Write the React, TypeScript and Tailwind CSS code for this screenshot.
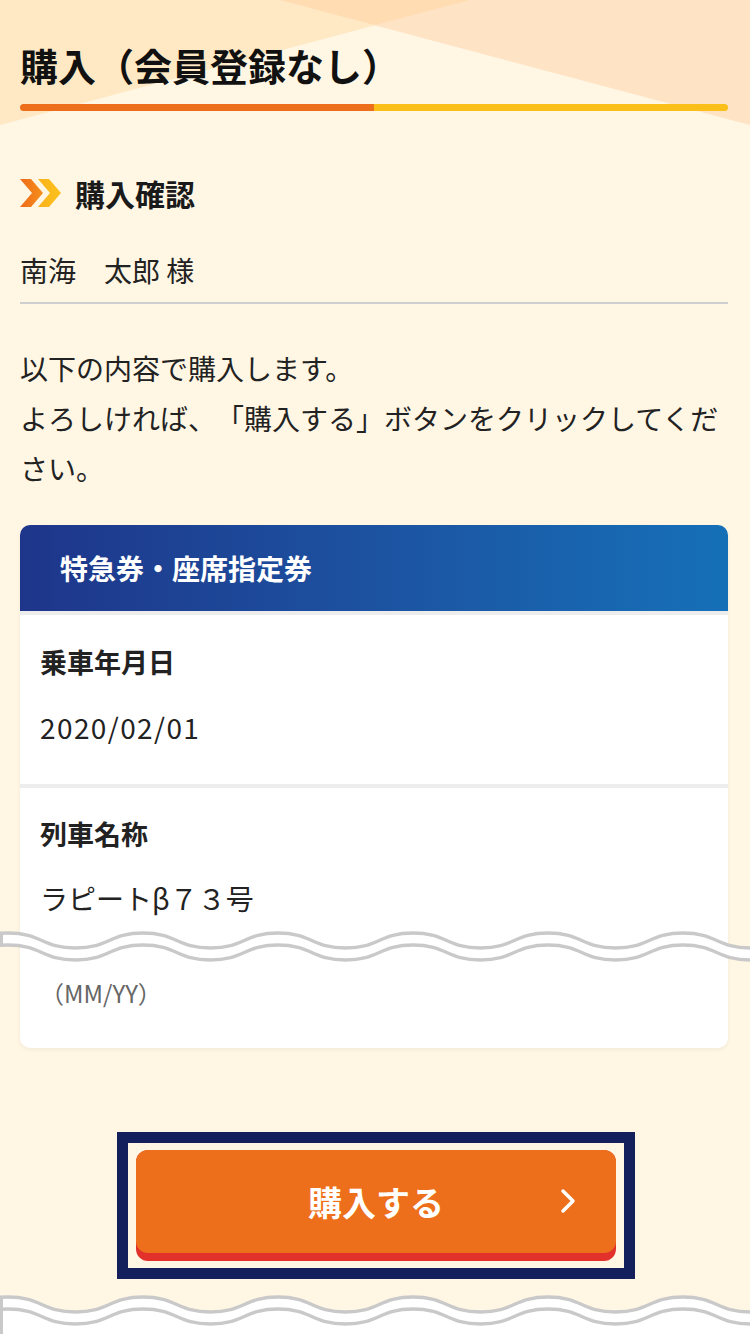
import React from "react";

const FONT = { fontFamily: '"Noto Sans CJK JP", "Noto Sans", sans-serif' };

// 波線（セクション省略の表示）
function wavePath(y0: number, amp: number, to: number) {
	const period = 135;
	const half = period / 2;
	let x = 8 - period; // 山の位置
	let d = `M ${x} ${y0}`;
	let up = true;
	while (x < to) {
		const y1 = up ? y0 + amp : y0;
		const yStart = up ? y0 : y0 + amp;
		d += ` C ${x + half / 2} ${yStart}, ${x + half / 2} ${y1}, ${x + half} ${y1}`;
		x += half;
		up = !up;
	}
	return d;
}

function Wave({ fillBelow }: { fillBelow?: boolean }) {
	const upper = wavePath(7, 15, 770);
	const lower = wavePath(19, 15, 770);
	const h = fillBelow ? 44 : 40;
	const clipId = fillBelow ? "band2" : "band1";
	return (
		<svg width="750" height={h} viewBox={`0 0 750 ${h}`} className="block">
			<defs>
				<clipPath id={clipId}>
					<path d={`${lower} L 800 -10 L -200 -10 Z`} />
				</clipPath>
			</defs>
			{fillBelow ? (
				<path d={`${upper} L 800 ${h} L -200 ${h} Z`} fill="#ffffff" />
			) : (
				<path
					d={`${upper} L 800 40 L -200 40 Z`}
					fill="#ffffff"
					clipPath={`url(#${clipId})`}
				/>
			)}
			<path d={upper} fill="none" stroke="#c9c9c9" strokeWidth="3.5" />
			<path d={lower} fill="none" stroke="#c9c9c9" strokeWidth="3.5" />
			<line
				x1="1.5"
				y1="7"
				x2="1.5"
				y2={fillBelow ? h : 19}
				stroke="#c9c9c9"
				strokeWidth="3"
			/>
		</svg>
	);
}

function Chevrons() {
	return (
		<svg width="42" height="28" viewBox="0 0 42 28">
			<defs>
				<linearGradient id="c1" x1="0" x2="1" y1="0" y2="0">
					<stop offset="0" stopColor="#ee6a1a" />
					<stop offset="1" stopColor="#f5901c" />
				</linearGradient>
				<linearGradient id="c2" x1="0" x2="1" y1="0" y2="0">
					<stop offset="0" stopColor="#f9b21b" />
					<stop offset="1" stopColor="#fcc21d" />
				</linearGradient>
			</defs>
			<polygon points="0,0 11,0 23,14 11,28 0,28 12,14" fill="url(#c1)" />
			<polygon points="18,0 29,0 41,14 29,28 18,28 30,14" fill="url(#c2)" />
		</svg>
	);
}

export default function App() {
	return (
		<div className="w-[750px] h-[1334px] overflow-hidden bg-[#fff6e4] text-[#222]" style={FONT}>
			{/* ヘッダー */}
			<div className="relative">
				<svg
					width="750"
					height="130"
					viewBox="0 0 750 130"
					className="absolute top-0 left-0"
				>
					<polygon points="0,0 470,0 0,125" fill="#ffe9c4" />
					<polygon points="280,0 750,0 750,125" fill="#ffe3c5" />
					<polygon points="280,0 470,0 375,25" fill="#ffdcb2" />
				</svg>
				<div className="relative pl-5 pr-[22px] pt-[40px]">
					<h1 className="text-[38px] leading-[50px] font-bold text-[#111]">
						購入（会員登録なし）
					</h1>
					<div className="mt-[14px] flex h-[7px] rounded-full overflow-hidden">
						<div className="w-1/2 bg-[#ee6f1b]" />
						<div className="w-1/2 bg-[#fbbf1a]" />
					</div>
				</div>
			</div>

			<div className="pl-5 pr-[22px]">
				{/* 購入確認 */}
				<div className="mt-[62px] flex items-center gap-[13px] h-[40px]">
					<Chevrons />
					<h2 className="text-[30px] leading-[40px] font-bold text-[#1a1a1a]">購入確認</h2>
				</div>
				<p className="mt-[37px] text-[28px] leading-[40px] pb-[12px] border-b-2 border-[#cfcfcf]">
					南海　太郎 様
				</p>
				<p className="mt-[39px] text-[28px] leading-[50px] [text-spacing-trim:space-all]">
					以下の内容で購入します。
					<br />
					よろしければ、「購入する」ボタンをクリックしてください。
				</p>

				{/* 購入内容カード */}
				<div className="mt-[32px] bg-white rounded-[10px] shadow-[0_2px_4px_rgba(0,0,0,0.05)]">
					<div className="h-[86px] rounded-t-[10px] bg-linear-to-r from-[#1e358a] to-[#1570b8] flex items-center pl-10">
						<span className="text-white font-bold text-[28px]">特急券・座席指定券</span>
					</div>
					<div className="border-t-4 border-[#ededed] px-5 pt-[29px] pb-[37px]">
						<div className="text-[27px] leading-[36px] font-bold">乗車年月日</div>
						<div className="mt-[27px] text-[28px] leading-[40px] tracking-[0.05em]">2020/02/01</div>
					</div>
					<div className="border-t-4 border-[#ededed] px-5 pt-[28px]">
						<div className="text-[27px] leading-[36px] font-bold">列車名称</div>
						<div className="mt-[26px] text-[28px] leading-[40px]">ラピートβ７３号</div>
					</div>
					<div className="-ml-5 mt-[8px]">
						<Wave />
					</div>
					<div className="px-5 pt-[11px] pb-[39px] text-[24px] leading-[32px] text-[#666]">
						（MM/YY）
					</div>
				</div>

				{/* 購入ボタン */}
				<div className="mt-[84px] flex justify-center">
					<div className="ml-[4px] border-[11px] border-[#13205b] px-[8px] py-[7px]">
						<button className="relative w-[480px] h-[111px] rounded-[12px] bg-[#e2302b] pb-[8px] block">
							<div className="h-full rounded-[12px] bg-[#ee6f1b] flex items-center justify-center">
								<span className="text-white font-bold text-[34px]" style={FONT}>
									購入する
								</span>
							</div>
							<svg
								width="16"
								height="26"
								viewBox="0 0 16 26"
								className="absolute right-[40px] top-[38px]"
							>
								<polyline
									points="3,3 13,13 3,23"
									fill="none"
									stroke="#fff"
									strokeWidth="3.5"
									strokeLinecap="round"
									strokeLinejoin="round"
								/>
							</svg>
						</button>
					</div>
				</div>
			</div>
			<div className="mt-[11px]">
				<Wave fillBelow />
			</div>
		</div>
	);
}
